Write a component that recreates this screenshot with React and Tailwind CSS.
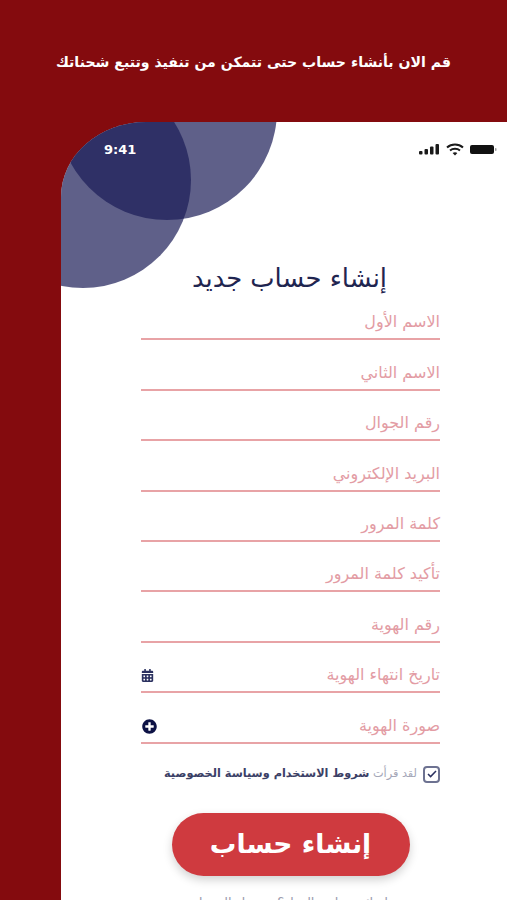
import { FaCalendarAlt, FaPlusCircle } from "react-icons/fa";

const fields = [
  "الاسم الأول",
  "الاسم الثاني",
  "رقم الجوال",
  "البريد الإلكتروني",
  "كلمة المرور",
  "تأكيد كلمة المرور",
  "رقم الهوية",
];

function Field({ label, icon }) {
  return (
    <div className="flex h-[50.4px] items-end justify-between border-b-2 border-[#e8a3a6] pb-[5px]">
      <span className="text-[16px] leading-[22px] text-[#e39ca4]">{label}</span>
      {icon}
    </div>
  );
}

function StatusIcons() {
  return (
    <div className="flex items-center gap-[6px]" dir="ltr">
      <svg width="21" height="11" viewBox="0 0 21 11" fill="#1a1a1a">
        <rect x="0" y="7" width="3.5" height="3.5" rx="1" />
        <rect x="5.5" y="5" width="3.5" height="5.5" rx="1" />
        <rect x="11" y="2.5" width="3.5" height="8" rx="1" />
        <rect x="16.5" y="0" width="3.5" height="10.5" rx="1" />
      </svg>
      <svg width="18" height="13" viewBox="0 0 18 13" fill="none" stroke="#1a1a1a" strokeWidth="2">
        <path d="M1 4.5C5.5 0.5 12.5 0.5 17 4.5" />
        <path d="M4 7.5C6.8 5.2 11.2 5.2 14 7.5" />
        <path d="M9 12.5 L6.6 10 C8 9 10 9 11.4 10 Z" fill="#1a1a1a" stroke="none" />
      </svg>
      <svg width="27" height="11" viewBox="0 0 27 11" fill="#111">
        <rect x="0" y="1" width="24" height="9" rx="2" />
        <rect x="25" y="4" width="1.5" height="3" rx="0.7" fill="#999" />
      </svg>
    </div>
  );
}

export default function App() {
  return (
    <div
      dir="rtl"
      className="flex h-screen flex-col overflow-hidden bg-[#840b0e] font-['DejaVu_Sans',sans-serif]"
    >
      <header className="flex h-[122px] shrink-0 items-start justify-center pt-[52px]">
        <h1 className="text-[14.1px] font-bold text-white">قم الان بأنشاء حساب حتى تتمكن من تنفيذ وتتبع شحناتك</h1>
      </header>

      <div className="flex flex-1 justify-end" dir="ltr">
        <main className="relative w-[446px] overflow-hidden rounded-tl-[85px_75px] bg-white" dir="rtl">
          <div className="absolute left-[-4px] top-[-122px] h-[220px] w-[220px] rounded-full bg-[#1b1d57]/70" />
          <div className="absolute left-[-86px] top-[-50px] h-[216px] w-[216px] rounded-full bg-[#1b1d57]/70" />

          <div className="relative flex h-[55px] items-center justify-between pl-[43px] pr-[10px]" dir="ltr">
            <span className="text-[13px] font-bold text-white">9:41</span>
            <StatusIcons />
          </div>

          <h2 className="relative mt-[86px] pr-[120px] text-[25.8px] leading-[30px] text-[#1f2550]">إنشاء حساب جديد</h2>

          <form className="relative ml-[80px] mr-[67px] mt-[-3px]">
            {fields.map((label) => (
              <Field key={label} label={label} />
            ))}
            <Field label="تاريخ انتهاء الهوية" icon={<FaCalendarAlt className="mb-[4px] text-[13px] text-[#2b3160]" />} />
            <Field label="صورة الهوية" icon={<FaPlusCircle className="mb-[3px] ml-px text-[15px] text-[#0d1245]" />} />

            <div className="mt-[22px] flex items-center gap-[6px]">
              <span className="flex h-[17px] w-[17px] items-center justify-center rounded-[4px] border-2 border-[#6d7291]">
                <svg width="10" height="8" viewBox="0 0 10 8" fill="none" stroke="#2b3160" strokeWidth="1.5">
                  <path d="M1 4l2.6 2.6L9 1" />
                </svg>
              </span>
              <p className="text-[11.3px] text-[#a5a7b8]">
                لقد قرأت <b className="text-[#3b4066]">شروط الاستخدام وسياسة الخصوصية</b>
              </p>
            </div>

            <button
              type="button"
              className="mx-auto mt-[30px] block h-[63px] w-[238px] rounded-full bg-[#cf3a3f] text-[26.5px] font-bold text-white shadow-[0_4px_10px_rgba(0,0,0,0.18)]"
            >
              إنشاء حساب
            </button>

            <p className="mt-[17px] text-center text-[13px] text-[#9a9cae]">لديك حساب بالفعل؟ تسجيل الدخول</p>
          </form>
        </main>
      </div>
    </div>
  );
}
